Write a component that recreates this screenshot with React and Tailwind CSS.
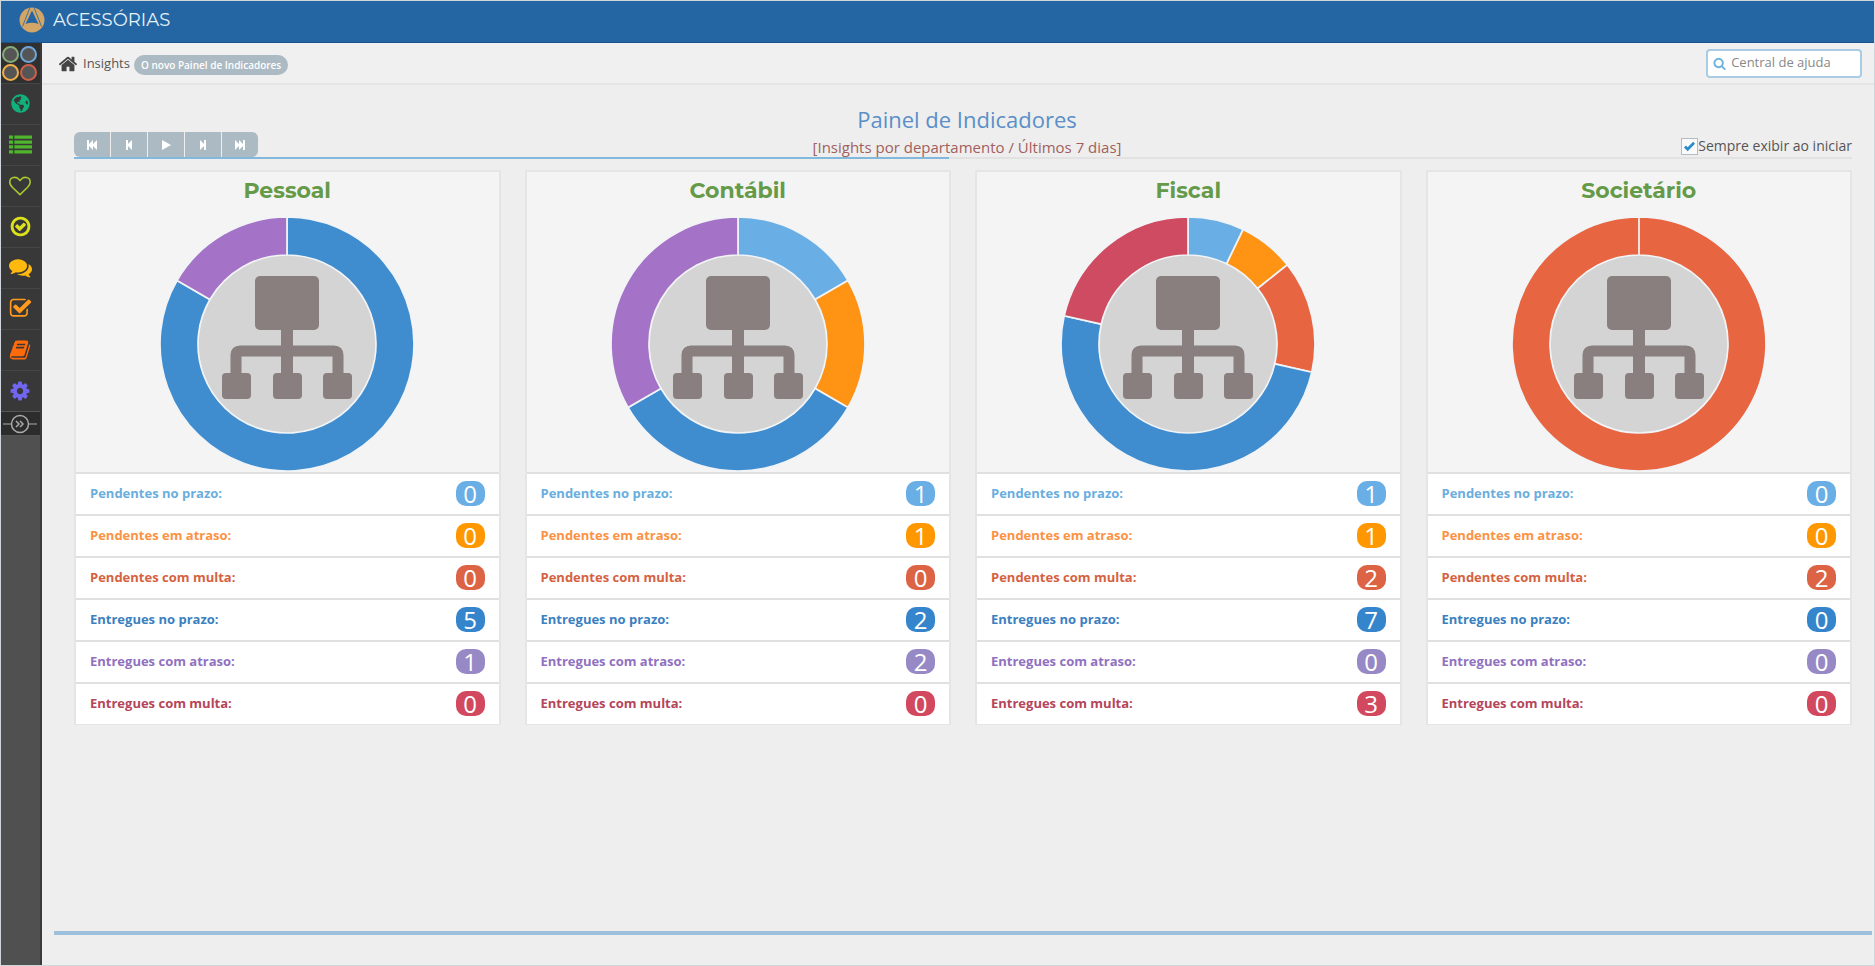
import React, { useState } from 'react';
import { FaGlobeAmericas } from 'react-icons/fa';

const ICONS = {
  home: 'M1472 992v480q0 26-19 45t-45 19h-384v-384h-256v384h-384q-26 0-45-19t-19-45v-480q0-1 .5-3t.5-3l575-474 575 474q1 2 1 6zm223-69l-62 74q-8 9-21 11h-3q-13 0-21-7l-692-577-692 577q-12 8-24 7-13-2-21-11l-62-74q-8-10-7-23.5t11-21.5l719-599q32-26 76-26t76 26l244 204v-195q0-14 9-23t23-9h192q14 0 23 9t9 23v408l219 182q10 8 11 21.5t-7 23.5z',
  list: 'M0 192h320v256H0zM416 192h1376v256H416zM0 576h320v256H0zM416 576h1376v256H416zM0 960h320v256H0zM416 960h1376v256H416zM0 1344h320v256H0zM416 1344h1376v256H416z',
  heart: 'M1664 596q0-81-21.5-143t-55-98.5-81.5-59.5-94-31-98-8-112 25.5-110.5 64-86.5 72-60 61.5q-18 22-49 22t-49-22q-24-28-60-61.5t-86.5-72-110.5-64-112-25.5-98 8-94 31-81.5 59.5-55 98.5-21.5 143q0 168 187 355l581 560 580-559q188-188 188-356zm128 0q0 221-229 450l-623 600q-18 18-44 18t-44-18l-624-602q-10-8-27.5-26t-55.5-65.5-68-97.5-53.5-121-23.5-138q0-220 127-344t351-124q62 0 126.5 21.5t120 58 95.5 68.5 76 68q36-36 76-68t95.5-68.5 120-58 126.5-21.5q224 0 351 124t127 344z',
  checkCircle: 'M1299 813l-422 422q-19 19-45 19t-45-19l-294-294q-19-19-19-45t19-45l102-102q19-19 45-19t45 19l147 147 275-275q19-19 45-19t45 19l102 102q19 19 19 45t-19 45zm141 83q0-148-73-273t-198-198-273-73-273 73-198 198-73 273 73 273 198 198 273 73 273-73 198-198 73-273zm224 0q0 209-103 385.5t-279.5 279.5-385.5 103-385.5-103-279.5-279.5-103-385.5 103-385.5 279.5-279.5 385.5-103 385.5 103 279.5 279.5 103 385.5z',
  comments: 'M1408 768q0 139-94 257t-256.5 186.5-353.5 68.5q-86 0-176-16-124 88-278 128-36 9-86 16h-3q-11 0-20.5-8t-11.5-21q-1-3-1-6.5t.5-6.5 2-6l2.5-5 3.5-5.5 4-5 4.5-5 4-4.5q5-6 23-25t26-29.5 22.5-29 25-38.5 20.5-44q-124-72-195-177t-71-224q0-139 94-257t256.5-186.5 353.5-68.5 353.5 68.5 256.5 186.5 94 257zm384 256q0 120-71 224.5t-195 176.5q10 24 20.5 44t25 38.5 22.5 29 26 29.5 23 25q1 1 4 4.5t4.5 5 4 5 3.5 5.5l2.5 5 2 6 .5 6.5-1 6.5q-3 14-13 22t-22 7q-50-7-86-16-154-40-278-128-90 16-176 16-271 0-472-132 58 4 88 4 161 0 309-45t264-129q125-92 192-212t67-254q0-77-23-152 129 71 204 178t75 230z',
  checkSquare: 'M1472 930v318q0 119-84.5 203.5t-203.5 84.5h-832q-119 0-203.5-84.5t-84.5-203.5v-832q0-119 84.5-203.5t203.5-84.5h832q63 0 117 25 15 7 18 23 3 17-9 29l-49 49q-10 10-23 10-3 0-9-2-23-6-45-6h-832q-66 0-113 47t-47 113v832q0 66 47 113t113 47h832q66 0 113-47t47-113v-254q0-13 9-22l64-64q10-10 23-10 6 0 12 3 20 8 20 29zm231-489l-814 814q-24 24-57 24t-57-24l-430-430q-24-24-24-57t24-57l110-110q24-24 57-24t57 24l263 263 647-647q24-24 57-24t57 24l110 110q24 24 24 57t-24 57z',
  book: 'M1703 478q40 57 18 129l-275 906q-19 64-76.5 107.5t-122.5 43.5h-923q-77 0-148.5-53.5t-99.5-131.5q-24-67-2-127 0-4 3-27t4-37q1-8-3-21.5t-3-19.5q2-11 8-21t16.5-23.5 16.5-23.5q23-38 45-91.5t30-91.5q3-10 .5-30t-.5-28q3-11 17-28t17-23q21-36 42-92t25-90q1-9-2.5-32t.5-28q4-13 22-30.5t22-22.5q19-26 42.5-84.5t27.5-96.5q1-8-3-25.5t-2-26.5q2-8 9-18t18-23 17-21q8-12 16.5-30.5t15-35 16-36 19.5-32 26.5-23.5 36-11.5 47.5 5.5l-1 3q38-9 51-9h761q74 0 114 56t18 130l-274 906q-36 119-71.5 153.5t-128.5 34.5h-869q-27 0-38 15-11 16-1 43 24 70 144 70h923q29 0 56-15.5t35-41.5l300-987q7-22 5-57 38 15 59 43zm-1064 2q-4 13 2 22.5t20 9.5h608q13 0 25.5-9.5t16.5-22.5l21-64q4-13-2-22.5t-20-9.5h-608q-13 0-25.5 9.5t-16.5 22.5zm-83 256q-4 13 2 22.5t20 9.5h608q13 0 25.5-9.5t16.5-22.5l21-64q4-13-2-22.5t-20-9.5h-608q-13 0-25.5 9.5t-16.5 22.5z',
  cog: 'M1152 896q0-106-75-181t-181-75-181 75-75 181 75 181 181 75 181-75 75-181zm512-109v222q0 12-8 23t-20 13l-185 28q-19 54-39 91 35 50 107 138 10 12 10 25t-9 23q-27 37-99 108t-94 71q-12 0-26-9l-138-108q-44 23-91 38-16 136-29 186-7 28-36 28h-222q-14 0-24.5-8.5t-11.5-21.5l-28-184q-49-16-90-37l-141 107q-10 9-25 9-14 0-25-11-126-114-165-168-7-10-7-23 0-12 8-23 15-21 51-66.5t54-70.5q-27-50-41-99l-183-27q-13-2-21-12.5t-8-23.5v-222q0-12 8-23t19-13l186-28q14-46 39-92-40-57-107-138-10-12-10-24 0-10 9-23 26-36 98.5-107.5t94.5-71.5q13 0 26 10l138 107q44-23 91-38 16-136 29-186 7-28 36-28h222q14 0 24.5 8.5t11.5 21.5l28 184q49 16 90 37l142-107q9-9 24-9 13 0 25 10 129 119 165 170 7 8 7 22 0 12-8 23-15 21-51 66.5t-54 70.5q26 50 41 98l183 28q13 2 21 12.5t8 23.5z',
  search: 'M1216 832q0-185-131.5-316.5t-316.5-131.5-316.5 131.5-131.5 316.5 131.5 316.5 316.5 131.5 316.5-131.5 131.5-316.5zm512 832q0 52-38 90t-90 38q-54 0-90-38l-343-342q-179 124-399 124-143 0-273.5-55.5t-225-150-150-225-55.5-273.5 55.5-273.5 150-225 225-150 273.5-55.5 273.5 55.5 225 150 150 225 55.5 273.5q0 220-124 399l343 343q37 37 37 90z',
};

function Icon({ name, size = 20 }) {
  return (
    <svg width={size} height={size} viewBox="0 0 1792 1792" fill="currentColor" aria-hidden="true">
      <path d={ICONS[name]} />
    </svg>
  );
}

const menu = [
  { name: 'globe', label: 'Portal', color: 'text-[#12b07a]' },
  { name: 'list', label: 'Listas', color: 'text-[#4fb52c]', size: 23 },
  { name: 'heart', label: 'Favoritos', color: 'text-[#a9c92f]', size: 22 },
  { name: 'checkCircle', label: 'Entregas', color: 'text-[#dbe11c]', size: 23 },
  { name: 'comments', label: 'Mensagens', color: 'text-[#ffb90f]', size: 23 },
  { name: 'checkSquare', label: 'Tarefas', color: 'text-[#ff9a1c]', size: 23 },
  { name: 'book', label: 'Cadastros', color: 'text-[#ff6a0a]', size: 22 },
  { name: 'cog', label: 'Ajustes', color: 'text-[#7066f0]', size: 22 },
];

const player = [
  { label: 'Primeiro', d: 'M1 1h2v4l4-4v4l4-4v10l-4-4v4l-4-4v4h-2z' },
  { label: 'Anterior', d: 'M3 1h2v4l4-4v10l-4-4v4h-2z' },
  { label: 'Iniciar', d: 'M2 1l9 5-9 5z' },
  { label: 'Próximo', d: 'M9 1h-2v4l-4-4v10l4-4v4h2z' },
  { label: 'Último', d: 'M11 1h-2v4l-4-4v4l-4-4v10l4-4v4l4-4v4h2z' },
];

const statuses = [
  { label: 'Pendentes no prazo:', fill: '#69aee5', text: 'text-[#6aaede]', badge: 'bg-[#69aee5]' },
  { label: 'Pendentes em atraso:', fill: '#ff9414', text: 'text-[#fb9244]', badge: 'bg-[#ff9800]' },
  { label: 'Pendentes com multa:', fill: '#e86541', text: 'text-[#d5623f]', badge: 'bg-[#dc6445]' },
  { label: 'Entregues no prazo:', fill: '#3f8ccf', text: 'text-[#3b80bf]', badge: 'bg-[#3585cc]' },
  { label: 'Entregues com atraso:', fill: '#a472c6', text: 'text-[#9071bf]', badge: 'bg-[#9789c5]' },
  { label: 'Entregues com multa:', fill: '#cf4b61', text: 'text-[#b4455a]', badge: 'bg-[#d1485f]' },
];

const departments = [
  { name: 'Pessoal', values: [0, 0, 0, 5, 1, 0] },
  { name: 'Contábil', values: [1, 1, 0, 2, 2, 0] },
  { name: 'Fiscal', values: [1, 1, 2, 7, 0, 3] },
  { name: 'Societário', values: [0, 0, 2, 0, 0, 0] },
];

const OUTER = 127;
const INNER = 89;

const polar = (r, t) => `${r * Math.sin(t * 2 * Math.PI)} ${-r * Math.cos(t * 2 * Math.PI)}`;

function slice(from, to) {
  // a full circle can't be drawn as a single arc
  const end = to - from >= 1 ? to - 0.00001 : to;
  const large = end - from > 0.5 ? 1 : 0;
  return `M${polar(OUTER, from)}A${OUTER} ${OUTER} 0 ${large} 1 ${polar(OUTER, end)}L${polar(INNER, end)}A${INNER} ${INNER} 0 ${large} 0 ${polar(INNER, from)}Z`;
}

function Donut({ values }) {
  const total = values.reduce((a, b) => a + b, 0);
  let acc = 0;
  return (
    <svg className="w-64 h-64" viewBox="-128 -128 256 256" role="img" aria-label="Gráfico do departamento">
      <circle r={INNER} fill="#d4d4d4" />
      {values.map((value, i) => {
        if (!value) return null;
        const from = acc / total;
        acc += value;
        return <path key={i} d={slice(from, acc / total)} fill={statuses[i].fill} stroke="#f1f4f7" strokeWidth="1.7" />;
      })}
      <g fill="#887f7e">
        <rect x="-32" y="-68" width="64" height="54" rx="5" />
        <rect x="-6" y="-18" width="12" height="50" />
        <rect x="-65" y="29" width="29" height="26" rx="4" />
        <rect x="-14" y="29" width="29" height="26" rx="4" />
        <rect x="36" y="29" width="29" height="26" rx="4" />
      </g>
      <path d="M-51 32V11Q-51 7 -47 7H47Q51 7 51 11V32" fill="none" stroke="#887f7e" strokeWidth="11" />
    </svg>
  );
}

function DepartmentCard({ name, values }) {
  return (
    <section className="border-2 border-b border-[#e5e5e5] bg-[#f4f4f4]">
      <h2 className="h-11 pt-px text-center font-['Montserrat','Inter',sans-serif] text-[22px] leading-9 font-bold text-[#659a48]">{name}</h2>
      <div className="flex justify-center">
        <Donut values={values} />
      </div>
      <ul className="bg-white">
        {statuses.map((s) => (
          <li key={s.label} className="flex h-[42px] items-center justify-between border-t-2 border-[#e0e0e0] px-[14px] pb-px">
            <span className={`text-[13px] font-bold ${s.text}`}>{s.label}</span>
            <span className={`flex h-[25px] w-[29px] items-center justify-center rounded-[10px] text-2xl text-white ${s.badge}`}>{values[statuses.indexOf(s)]}</span>
          </li>
        ))}
      </ul>
    </section>
  );
}

function Sidebar() {
  return (
    <nav className="w-[41px] shrink-0 border-r-2 border-[#3a3a3a] bg-[#505050]">
      <div className="grid h-10 grid-cols-[17px_17px] content-center gap-px bg-[#303030] pl-px">
        <span className="size-[17px] rounded-full border-2 border-[#84ab78] bg-[#555]"></span>
        <span className="size-[17px] rounded-full border-2 border-[#6ea7dc] bg-[#555]"></span>
        <span className="size-[17px] rounded-full border-2 border-[#efae48] bg-[#555]"></span>
        <span className="size-[17px] rounded-full border-2 border-[#cf5f49] bg-[#555]"></span>
      </div>
      {menu.map((item) => (
        <a key={item.name} href="#" aria-label={item.label} className={`flex h-[41px] items-center justify-center border-t border-[#464646] bg-[#383838] pr-px pb-px ${item.color}`}>
          {item.name === 'globe' ? <FaGlobeAmericas size={19} /> : <Icon name={item.name} size={item.size} />}
        </a>
      ))}
      <button aria-label="Expandir menu" className="flex h-[25px] w-full items-center justify-center border-y border-[#555] bg-[#2c2c2c] pr-px text-[#aaa]">
        <svg width="36" height="20" viewBox="0 0 36 20" fill="none" stroke="currentColor">
          <path d="M1 10h8M27 10h8" />
          <circle cx="18" cy="10" r="8.5" strokeWidth="1.5" />
          <path d="M14 7l3 3-3 3M18 7l3 3-3 3" strokeWidth="1.5" />
        </svg>
      </button>
    </nav>
  );
}

export default function App() {
  const [always, setAlways] = useState(true);
  const [search, setSearch] = useState('');

  return (
    <div className="flex min-h-screen flex-col border border-[#d0d6dc] bg-[#eeeeee] font-['Open_Sans',sans-serif] text-[#555]">
      <header className="flex h-[42px] items-center border-b border-[#1b5089] bg-[#2465a3] pl-[18px] pb-1">
        <svg width="26" height="26" viewBox="0 0 26 26" aria-hidden="true">
          <circle cx="13" cy="13" r="12.5" fill="#d3a567" />
          <path d="M13 3.5L19.5 17q-6.500-2.500-13 0z" fill="#2465a3" />
          <path d="M11 .5L3.500 19.500M15 .5L22.500 19.500" stroke="#2465a3" strokeWidth=".8" />
        </svg>
        <span className="ml-2 font-['Montserrat','Lato',sans-serif] text-lg text-[#e6f1f8]">ACESSÓRIAS</span>
      </header>

      <div className="flex flex-1">
        <Sidebar />
        <main className="flex min-w-0 flex-1 flex-col">
          <div className="flex h-[42px] items-center border-b-2 border-[#e5e5e5] bg-[#f0f0f0] pr-3 pl-4">
            <div className="flex items-center pt-0.5">
              <a href="#" aria-label="Início" className="text-[#444]"><Icon name="home" size={20} /></a>
              <a href="#" className="ml-[5px] text-[13px]">Insights</a>
              <span className="mt-0.5 ml-1 flex h-5 items-center rounded-full bg-[#abbac3] px-[7px] text-[10px] font-semibold text-white">O novo Painel de Indicadores</span>
            </div>
            <label className="ml-auto flex h-[29px] w-[156px] items-center rounded border-2 border-[#a9cbe4] bg-white pl-[5px] text-[#6fb3e0]">
              <Icon name="search" size={15} />
              <input
                type="text"
                aria-label="Central de ajuda"
                placeholder="Central de ajuda"
                value={search}
                onChange={(e) => setSearch(e.target.value)}
                className="ml-[5px] w-full min-w-0 bg-transparent text-[13px] text-[#555] outline-none placeholder:text-[#888]"
              />
            </label>
          </div>

          <div className="pt-4 pr-[22px] pl-8">
            <div className="grid grid-cols-[1fr_auto_1fr] items-end">
              <div className="flex gap-px">
                {player.map((p) => (
                  <button key={p.label} aria-label={p.label} className="flex h-[25px] w-9 items-center justify-center bg-[#abbac3] text-white first:rounded-l-md last:rounded-r-md">
                    <svg width="12" height="12" viewBox="0 0 12 12" fill="currentColor"><path d={p.d} /></svg>
                  </button>
                ))}
              </div>
              <div className="pl-2 text-center">
                <h1 className="text-[22px] leading-9 text-[#5a8fc8]">Painel de Indicadores</h1>
                <p className="text-[15px] leading-5 text-[#a2605c]">[Insights por departamento / Últimos 7 dias]</p>
              </div>
              <label className="flex items-center justify-end pb-px text-sm">
                <input type="checkbox" checked={always} onChange={(e) => setAlways(e.target.checked)} className="peer sr-only" />
                <span className="flex size-[17px] items-center justify-center border border-[#b4bcc4] bg-[#fafafa] text-transparent peer-checked:text-[#2b8ccb]">
                  <svg width="11" height="11" viewBox="0 0 12 12" fill="none" stroke="currentColor" strokeWidth="3"><path d="M1 6l3 3 7-7" /></svg>
                </span>
                Sempre exibir ao iniciar
              </label>
            </div>
            <div className="h-[2px] bg-[#e2e2e2]">
              <div className="h-full bg-[#82b8dc]" style={{ width: '49.2%' }}></div>
            </div>

            <div className="mt-[11px] grid grid-cols-4 gap-6">
              {departments.map((d) => (
                <DepartmentCard key={d.name} {...d} />
              ))}
            </div>
          </div>

          <footer className="mt-auto mr-0.5 mb-[30px] ml-3 h-1 bg-[#9dc1dd]"></footer>
        </main>
      </div>
    </div>
  );
}
